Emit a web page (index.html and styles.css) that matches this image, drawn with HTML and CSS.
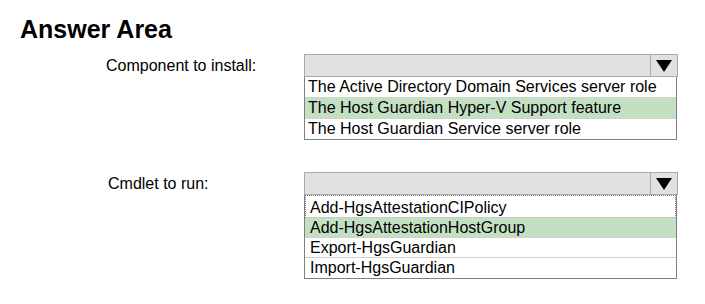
FILE: index.html
```html
<!DOCTYPE html>
<html lang="en">

<head>
    <meta charset="UTF-8">
    <title>Answer Area</title>
    <link rel="stylesheet" href="styles.css">
</head>

<body>
    <h2 class="title">Answer Area</h2>

    <div class="question">
        <div class="label">Component to install:</div>
        <div class="dropdown">
            <div class="select">
                <span class="value"></span>
                <span class="arrow"></span>
            </div>
            <ul class="options">
                <li>The Active Directory Domain Services server role</li>
                <li class="chosen">The Host Guardian Hyper-V Support feature</li>
                <li>The Host Guardian Service server role</li>
            </ul>
        </div>
    </div>

    <div class="question second">
        <div class="label cmd">Cmdlet to run:</div>
        <div class="dropdown">
            <div class="select">
                <span class="value"></span>
                <span class="arrow"></span>
            </div>
            <ul class="options cmdlets">
                <li class="focused">Add-HgsAttestationCIPolicy</li>
                <li class="chosen">Add-HgsAttestationHostGroup</li>
                <li>Export-HgsGuardian</li>
                <li>Import-HgsGuardian</li>
            </ul>
        </div>
    </div>
</body>

</html>
```

FILE: styles.css
```css
body {
    font-family: "Liberation Sans", Arial, sans-serif;
    background: #fff;
    color: #000;
    margin: 0;
    padding: 0;
}

.title {
    margin: 0;
    padding: 15px 0 0 20px;
    font-size: 25px;
    line-height: 28px;
    font-weight: bold;
}

.question {
    display: flex;
    align-items: flex-start;
    margin-top: 11px;
    padding-left: 106px;
}

.question.second {
    margin-top: 32px;
}

.label {
    width: 198px;
    height: 23px;
    line-height: 23px;
    font-size: 16px;
}

.label.cmd {
    padding-left: 2px;
    width: 196px;
}

.dropdown {
    width: 374px;
}

.select {
    display: flex;
    height: 23px;
    box-sizing: border-box;
    border: 1px solid #a9a9a9;
    background: #e1e1e1;
}

.value {
    flex: 1;
}

.arrow {
    width: 26px;
    border-left: 1px solid #a9a9a9;
    display: flex;
    align-items: center;
    justify-content: center;
}

.arrow::after {
    content: "";
    border-left: 8px solid transparent;
    border-right: 8px solid transparent;
    border-top: 12px solid #000;
    margin-top: 1px;
}

.options {
    list-style: none;
    margin: 0;
    padding: 0;
    width: 373px;
    box-sizing: border-box;
    border: 1px solid #808080;
    border-top: none;
}

.options li {
    height: 20px;
    line-height: 20px;
    font-size: 16px;
    padding-left: 3px;
    border-bottom: 1px solid #d0d0d0;
}

.options li:last-child {
    border-bottom: none;
}

.options li.chosen {
    background: #c4e0c3;
}

.cmdlets li {
    height: 19px;
    line-height: 19px;
    padding-left: 5px;
}

.cmdlets li:last-child {
    height: 20px;
}

.cmdlets li.focused {
    height: 21px;
    line-height: 23px;
    border: 1px dotted #777;
    border-bottom: 1px solid #c8c8c8;
    padding-left: 4px;
}
```
